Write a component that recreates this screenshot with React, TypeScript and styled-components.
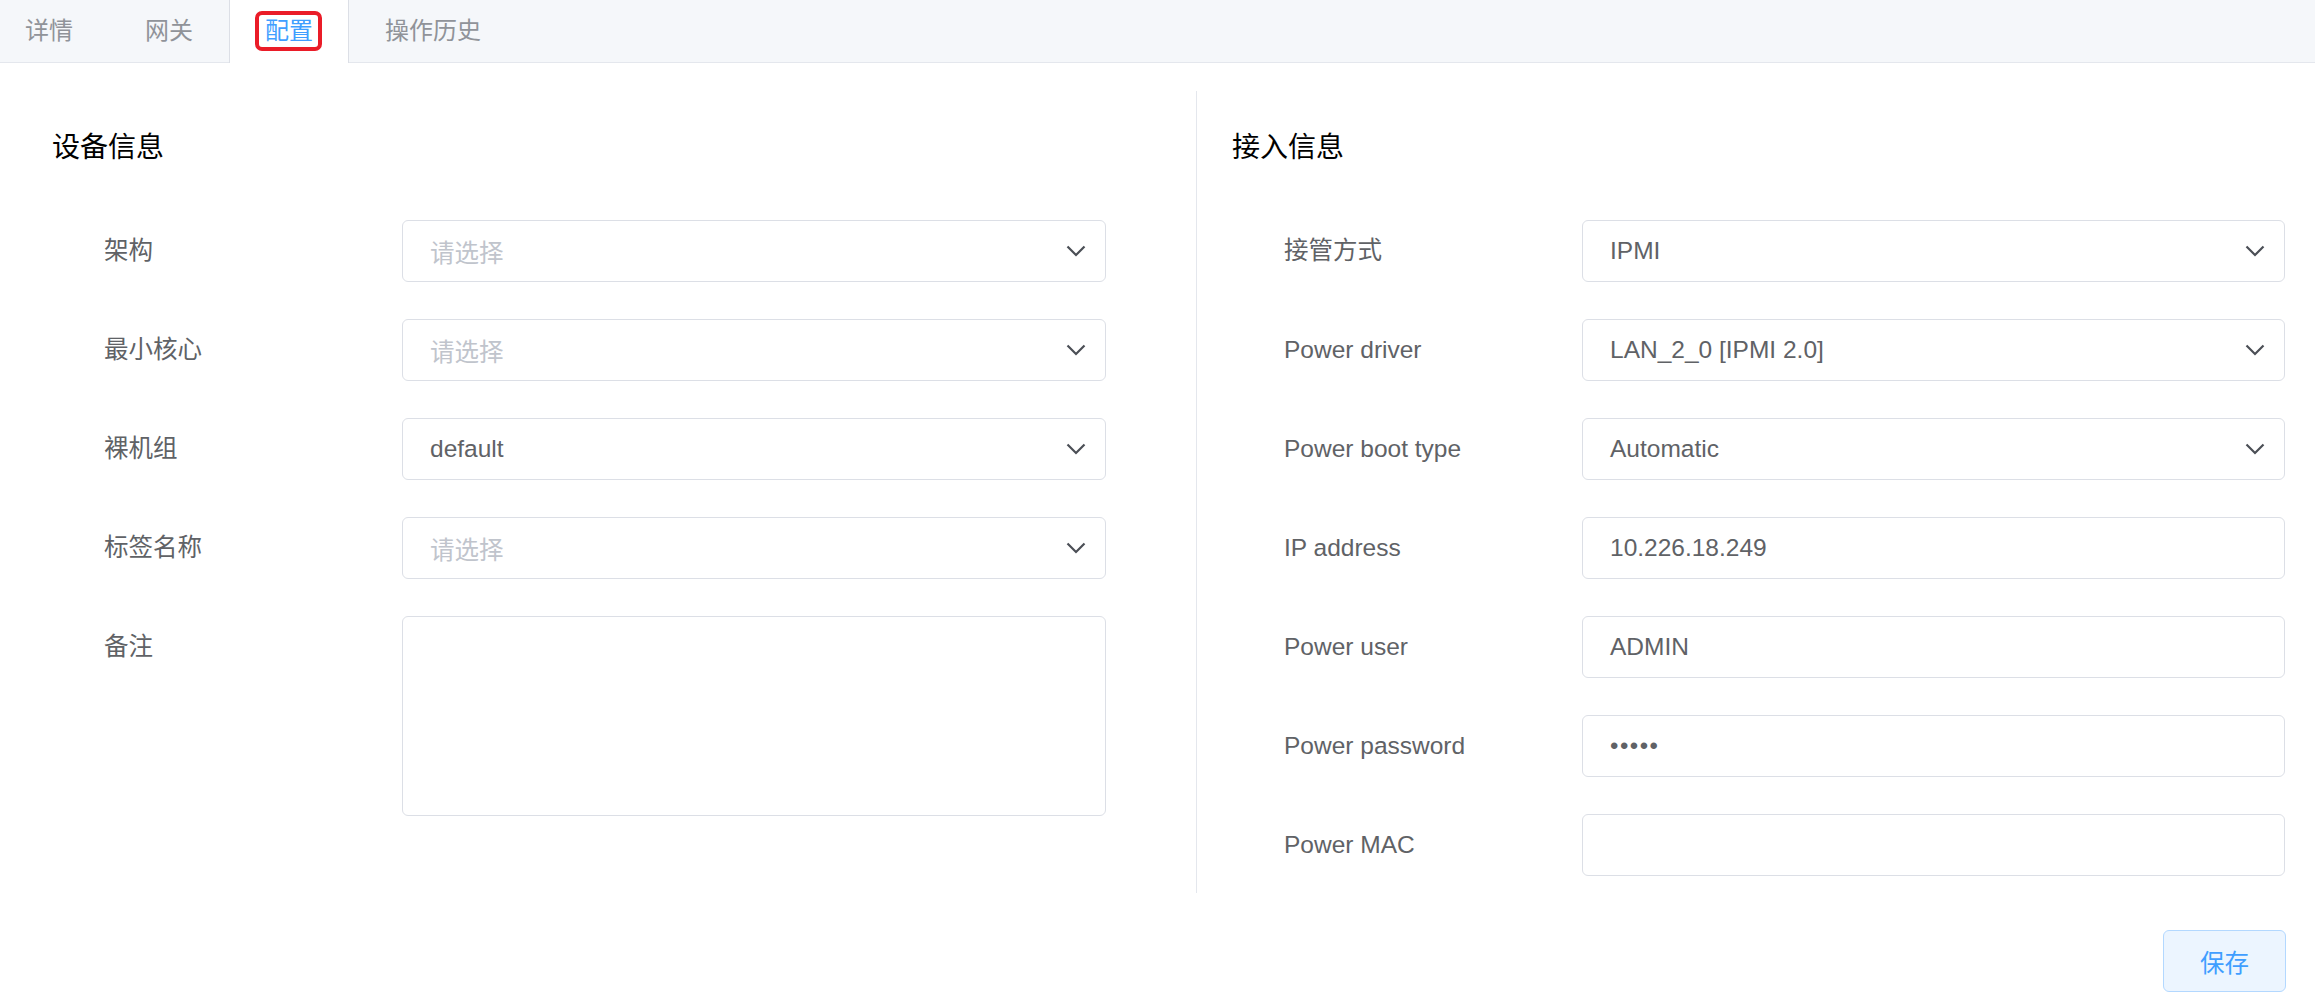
import styled, { createGlobalStyle } from "styled-components";

const GlobalStyle = createGlobalStyle`
  body {
    margin: 0;
    background: #fff;
    font-family: "Liberation Sans", "Noto Sans CJK SC", sans-serif;
  }
`;

const colors = {
  text: "#606266",
  placeholder: "#c0c4cc",
  border: "#dcdfe6",
  light: "#e4e7ed",
  primary: "#409eff",
  tabText: "#909399",
};

interface IField {
  label: string;
  value?: string;
  kind: "select" | "input" | "textarea" | "password";
}

const deviceFields: IField[] = [
  { label: "架构", kind: "select" },
  { label: "最小核心", kind: "select" },
  { label: "裸机组", value: "default", kind: "select" },
  { label: "标签名称", kind: "select" },
  { label: "备注", kind: "textarea" },
];

const accessFields: IField[] = [
  { label: "接管方式", value: "IPMI", kind: "select" },
  { label: "Power driver", value: "LAN_2_0 [IPMI 2.0]", kind: "select" },
  { label: "Power boot type", value: "Automatic", kind: "select" },
  { label: "IP address", value: "10.226.18.249", kind: "input" },
  { label: "Power user", value: "ADMIN", kind: "input" },
  { label: "Power password", value: "•••••", kind: "password" },
  { label: "Power MAC", kind: "input" },
];

const tabs = ["详情", "网关", "配置", "操作历史"];

function Chevron() {
  return (
    <svg width="20" height="12" viewBox="0 0 20 12">
      <polyline
        points="1.5,1.5 10,10 18.5,1.5"
        fill="none"
        stroke="#4b4f56"
        strokeWidth="2.2"
      />
    </svg>
  );
}

function FormRow({ field }: { field: IField }) {
  return (
    <Row>
      <Label>{field.label}</Label>
      {field.kind === "textarea" ? (
        <TextArea />
      ) : (
        <Field>
          <Value $empty={!field.value} $password={field.kind === "password"}>
            {field.value || (field.kind === "select" ? "请选择" : "")}
          </Value>
          {field.kind === "select" && <Chevron />}
        </Field>
      )}
    </Row>
  );
}

export default function App() {
  return (
    <>
      <GlobalStyle />
      <TabBar>
        {tabs.map((t, i) => (
          <Tab key={t} $active={i === 2} $first={i === 0}>
            {i === 2 ? <Marked>{t}</Marked> : t}
          </Tab>
        ))}
      </TabBar>
      <Columns>
        <LeftColumn>
          <Title>设备信息</Title>
          <Form>
            {deviceFields.map((f) => (
              <FormRow key={f.label} field={f} />
            ))}
          </Form>
        </LeftColumn>
        <RightColumn>
          <Title>接入信息</Title>
          <Form>
            {accessFields.map((f) => (
              <FormRow key={f.label} field={f} />
            ))}
          </Form>
        </RightColumn>
      </Columns>
      <Footer>
        <SaveButton>保存</SaveButton>
      </Footer>
    </>
  );
}

const TabBar = styled.div`
  display: flex;
  height: 62px;
  background: #f5f7fa;
  border-bottom: 1px solid ${colors.light};
`;

const Tab = styled.div<{ $active?: boolean; $first?: boolean }>`
  box-sizing: border-box;
  height: ${(p) => (p.$active ? "63px" : "62px")};
  line-height: 62px;
  padding: 0 35px 0 ${(p) => (p.$first ? "24px" : "35px")};
  font-size: 24px;
  color: ${(p) => (p.$active ? colors.primary : colors.tabText)};
  background: ${(p) => (p.$active ? "#fff" : "transparent")};
  border-left: 1px solid ${(p) => (p.$active ? colors.border : "transparent")};
  border-right: 1px solid ${(p) => (p.$active ? colors.border : "transparent")};
`;

const Marked = styled.span`
  display: inline-block;
  line-height: 32px;
  padding: 0 5px 0 6px;
  margin: 0 -5px 0 -6px;
  border-radius: 3px;
  outline: 4px solid #ea1c28;
`;

const Columns = styled.div`
  display: flex;
  margin-top: 28px;
`;

const LeftColumn = styled.div`
  box-sizing: border-box;
  width: 1196px;
  padding: 36px 90px 17px 52px;
`;

const RightColumn = styled.div`
  flex: 1;
  border-left: 1px solid ${colors.light};
  padding: 36px 30px 17px 35px;
`;

const Title = styled.div`
  font-size: 28px;
  line-height: 42px;
  color: #000;
  margin-bottom: 51px;
`;

const Form = styled.div`
  display: flex;
  flex-direction: column;
  gap: 37px;
  margin-left: 52px;
`;

const Row = styled.div`
  display: flex;
  align-items: flex-start;
`;

const Label = styled.div`
  width: 298px;
  flex-shrink: 0;
  line-height: 62px;
  font-size: 24.5px;
  color: ${colors.text};
`;

const Field = styled.div`
  flex: 1;
  box-sizing: border-box;
  height: 62px;
  display: flex;
  align-items: center;
  justify-content: space-between;
  padding: 0 19px 0 27px;
  border: 1px solid ${colors.border};
  border-radius: 6px;
  background: #fff;
`;

const Value = styled.span<{ $empty?: boolean; $password?: boolean }>`
  font-size: ${(p) => (p.$password ? "24px" : "24.5px")};
  color: ${(p) => (p.$empty ? colors.placeholder : colors.text)};
  letter-spacing: ${(p) => (p.$password ? "1.5px" : "normal")};
`;

const TextArea = styled.div`
  flex: 1;
  box-sizing: border-box;
  height: 200px;
  border: 1px solid ${colors.border};
  border-radius: 6px;
`;

const Footer = styled.div`
  display: flex;
  justify-content: flex-end;
  padding-right: 29px;
  margin-top: 37px;
`;

const SaveButton = styled.button`
  box-sizing: border-box;
  height: 62px;
  padding: 0 36px;
  font-family: inherit;
  font-size: 24.5px;
  color: ${colors.primary};
  background: #ecf5ff;
  border: 1px solid #b3d8ff;
  border-radius: 6px;
`;
